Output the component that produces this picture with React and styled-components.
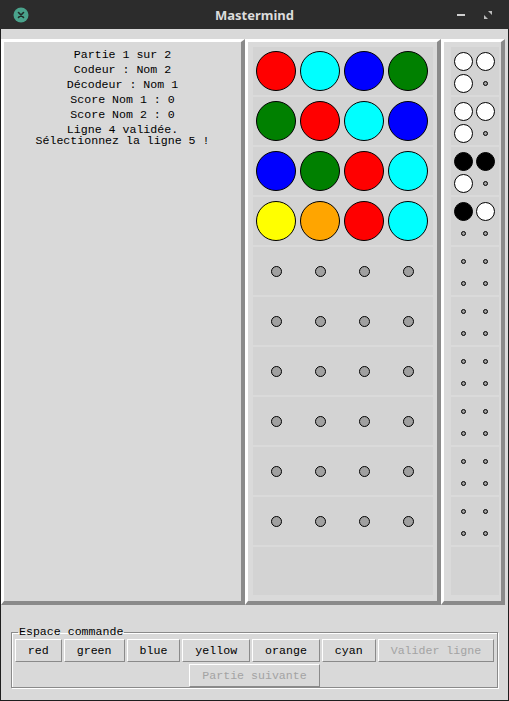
import React from "react";
import styled, { createGlobalStyle } from "styled-components";

const GlobalStyle = createGlobalStyle`
  html, body {
    margin: 0;
    padding: 0;
    background: #d9d9d9;
  }
`;

const Window = styled.div`
  width: 509px;
  height: 701px;
  display: flex;
  flex-direction: column;
  background: #d9d9d9;
  overflow: hidden;
`;

const TitleBar = styled.div`
  height: 29px;
  flex: none;
  background: #2c2c2c;
  display: grid;
  grid-template-columns: 120px 1fr 120px;
  align-items: center;
`;

const TitleText = styled.div`
  text-align: center;
  color: #dcdcdc;
  font-family: "Noto Sans", "DejaVu Sans", sans-serif;
  font-weight: 700;
  font-size: 13px;
`;

const Controls = styled.div`
  display: flex;
  align-items: center;
  justify-content: ${({ right }) => (right ? "flex-end" : "flex-start")};
  gap: 17px;
  padding: ${({ right }) => (right ? "0 16px 0 0" : "0 0 0 13px")};
`;

const Content = styled.div`
  flex: 1;
  display: flex;
  flex-direction: column;
  padding-top: 10px;
  border: 1px solid #1e1e1e;
  border-top: none;
`;

const Main = styled.div`
  display: flex;
  height: 566px;
  padding-right: 3px;
`;

const Panel = styled.div`
  box-sizing: border-box;
  width: ${({ w }) => w}px;
  background: ${({ bg }) => bg || "#d9d9d9"};
  border-style: solid;
  border-width: 3px 4px 4px 3px;
  border-color: #ffffff #8a8a8a #8a8a8a #ffffff;
  padding: ${({ pad }) => pad || "0"};
  display: flex;
  flex-direction: column;
  gap: 2px;
`;

const Info = styled.div`
  padding-top: 5px;
  font-family: "Liberation Mono", "DejaVu Sans Mono", monospace;
  font-size: 11.6px;
  color: #000;
  text-align: center;
`;

const InfoLine = styled.div`
  line-height: ${({ tight }) => (tight ? "11px" : "15px")};
  margin-top: ${({ tight }) => (tight ? "2px" : "0")};
  white-space: pre;
`;

const Row = styled.div`
  height: 48px;
  flex: none;
  background: #d3d3d3;
  box-sizing: border-box;
  display: grid;
  grid-template-columns: repeat(4, 44px);
  align-items: center;
  justify-items: center;
  padding-left: 1px;
`;

const PinRow = styled.div`
  height: 48px;
  width: 48px;
  flex: none;
  background: #d3d3d3;
  box-sizing: border-box;
  display: grid;
  grid-template-columns: 22px 22px;
  grid-template-rows: 22px 22px;
  align-items: center;
  justify-items: center;
  padding: 3px 0 0 1px;
`;

const Peg = styled.div`
  box-sizing: border-box;
  width: ${({ size }) => size}px;
  height: ${({ size }) => size}px;
  border-radius: 50%;
  border: 1px solid #000;
  background: ${({ color }) => color};
`;

const Bottom = styled.div`
  flex: 1;
  padding: 21px 10px 0 10px;
`;

const Group = styled.fieldset`
  margin: 0;
  padding: 0 2px 0 2px;
  width: 487px;
  box-sizing: border-box;
  border: 1px solid #8a8a8a;
  box-shadow: inset 1px 1px 0 #ffffff, 1px 1px 0 #ffffff;
  display: flex;
  flex-direction: column;
  align-items: center;
  gap: 2px;
  font-family: "Liberation Mono", "DejaVu Sans Mono", monospace;
  font-size: 11.6px;
`;

const Legend = styled.legend`
  margin-left: 4px;
  padding: 0 1px;
  line-height: 12px;
  color: #000;
`;

const ButtonRow = styled.div`
  display: flex;
  gap: 2px;
  justify-content: center;
  padding-top: ${({ first }) => (first ? "1px" : "0")};
`;

const Button = styled.button`
  height: 23px;
  padding: 0 12px;
  margin: 0;
  font-family: "Liberation Mono", "DejaVu Sans Mono", monospace;
  font-size: 11.6px;
  background: #d9d9d9;
  color: ${({ disabled }) => (disabled ? "#a3a3a3" : "#000")};
  border: 1px solid;
  border-color: #ffffff #8a8a8a #8a8a8a #ffffff;
  border-radius: 0;
`;

const COLORS = {
  red: "#ff0000",
  cyan: "#00ffff",
  blue: "#0000ff",
  green: "#008000",
  yellow: "#ffff00",
  orange: "#ffa500",
};

const board = [
  ["red", "cyan", "blue", "green"],
  ["green", "red", "cyan", "blue"],
  ["blue", "green", "red", "cyan"],
  ["yellow", "orange", "red", "cyan"],
  null, null, null, null, null, null,
  "empty",
];

const pins = [
  ["w", "w", "w", "s"],
  ["w", "w", "w", "s"],
  ["b", "b", "w", "s"],
  ["b", "w", "s", "s"],
  ["s", "s", "s", "s"],
  ["s", "s", "s", "s"],
  ["s", "s", "s", "s"],
  ["s", "s", "s", "s"],
  ["s", "s", "s", "s"],
  ["s", "s", "s", "s"],
  [],
];

function CloseIcon() {
  return (
    <svg width="16" height="16" viewBox="0 0 16 16">
      <circle cx="8" cy="8" r="7.5" fill="#4aa38c" />
      <path d="M5.5 5.5 L10.5 10.5 M10.5 5.5 L5.5 10.5" stroke="#1f2a27" strokeWidth="1.6" strokeLinecap="round" />
    </svg>
  );
}

function MinIcon() {
  return (
    <svg width="10" height="10" viewBox="0 0 10 10">
      <rect x="1" y="4" width="8" height="2" fill="#cfcfcf" />
    </svg>
  );
}

function MaxIcon() {
  return (
    <svg width="10" height="10" viewBox="0 0 10 10">
      <path d="M5 1 H9 V5 Z M1 5 L5 9 H1 Z" fill="#bdbdbd" />
    </svg>
  );
}

export default function App() {
  return (
    <Window>
      <GlobalStyle />
      <TitleBar>
        <Controls>
          <CloseIcon />
        </Controls>
        <TitleText>Mastermind</TitleText>
        <Controls right>
          <MinIcon />
          <MaxIcon />
        </Controls>
      </TitleBar>
      <Content>
        <Main>
          <Panel w={244}>
            <Info>
              <InfoLine>Partie 1 sur 2</InfoLine>
              <InfoLine>Codeur : Nom 2</InfoLine>
              <InfoLine>Décodeur : Nom 1</InfoLine>
              <InfoLine>Score Nom 1 : 0</InfoLine>
              <InfoLine>Score Nom 2 : 0</InfoLine>
              <InfoLine tight>
                {"Ligne 4 validée.\nSélectionnez la ligne 5 !"}
              </InfoLine>
            </Info>
          </Panel>
          <Panel w={196} bg="#dadada" pad="5px 4px 0 5px">
            {board.map((row, i) => (
              <Row key={i}>
                {Array.isArray(row) &&
                  row.map((c, j) => <Peg key={j} size={40} color={COLORS[c]} />)}
                {row === null &&
                  [0, 1, 2, 3].map((j) => <Peg key={j} size={11} color="#a0a0a0" />)}
              </Row>
            ))}
          </Panel>
          <Panel w={64} bg="#dadada" pad="5px 0 0 7px">
            {pins.map((row, i) => (
              <PinRow key={i}>
                {row.map((p, j) =>
                  p === "s" ? (
                    <Peg key={j} size={5} color="#a0a0a0" />
                  ) : (
                    <Peg key={j} size={19} color={p === "w" ? "#ffffff" : "#000000"} />
                  )
                )}
              </PinRow>
            ))}
          </Panel>
        </Main>
        <Bottom>
          <Group>
            <Legend>Espace commande</Legend>
            <ButtonRow first>
              <Button>red</Button>
              <Button>green</Button>
              <Button>blue</Button>
              <Button>yellow</Button>
              <Button>orange</Button>
              <Button>cyan</Button>
              <Button disabled>Valider ligne</Button>
            </ButtonRow>
            <ButtonRow>
              <Button disabled>Partie suivante</Button>
            </ButtonRow>
          </Group>
        </Bottom>
      </Content>
    </Window>
  );
}
